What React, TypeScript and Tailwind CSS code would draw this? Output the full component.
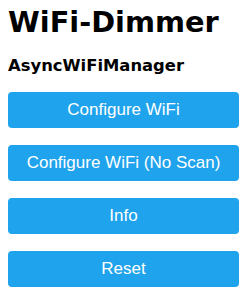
export default function App() {
  const buttons = ["Configure WiFi", "Configure WiFi (No Scan)", "Info", "Reset"];
  return (
    <div className="w-[250px] h-[300px] bg-white overflow-hidden px-2 pt-[5px]" style={{ fontFamily: '"DejaVu Sans", Verdana, sans-serif' }}>
      <h1 className="text-[28.8px] font-bold leading-[34px] text-black m-0">WiFi-Dimmer</h1>
      <h3 className="text-[16.4px] font-bold leading-[20px] text-black mt-[17px]">AsyncWiFiManager</h3>
      <div className="flex flex-col gap-[17px] mt-[16px] w-[231px]">
        {buttons.map((b) => (
          <button
            key={b}
            className="w-full h-[36px] rounded-[4px] bg-[#1fa3ec] text-white text-[17px] leading-[36px] border-0"
            style={{ fontFamily: '"Liberation Sans", Arial, sans-serif' }}
          >
            {b}
          </button>
        ))}
      </div>
    </div>
  );
}
